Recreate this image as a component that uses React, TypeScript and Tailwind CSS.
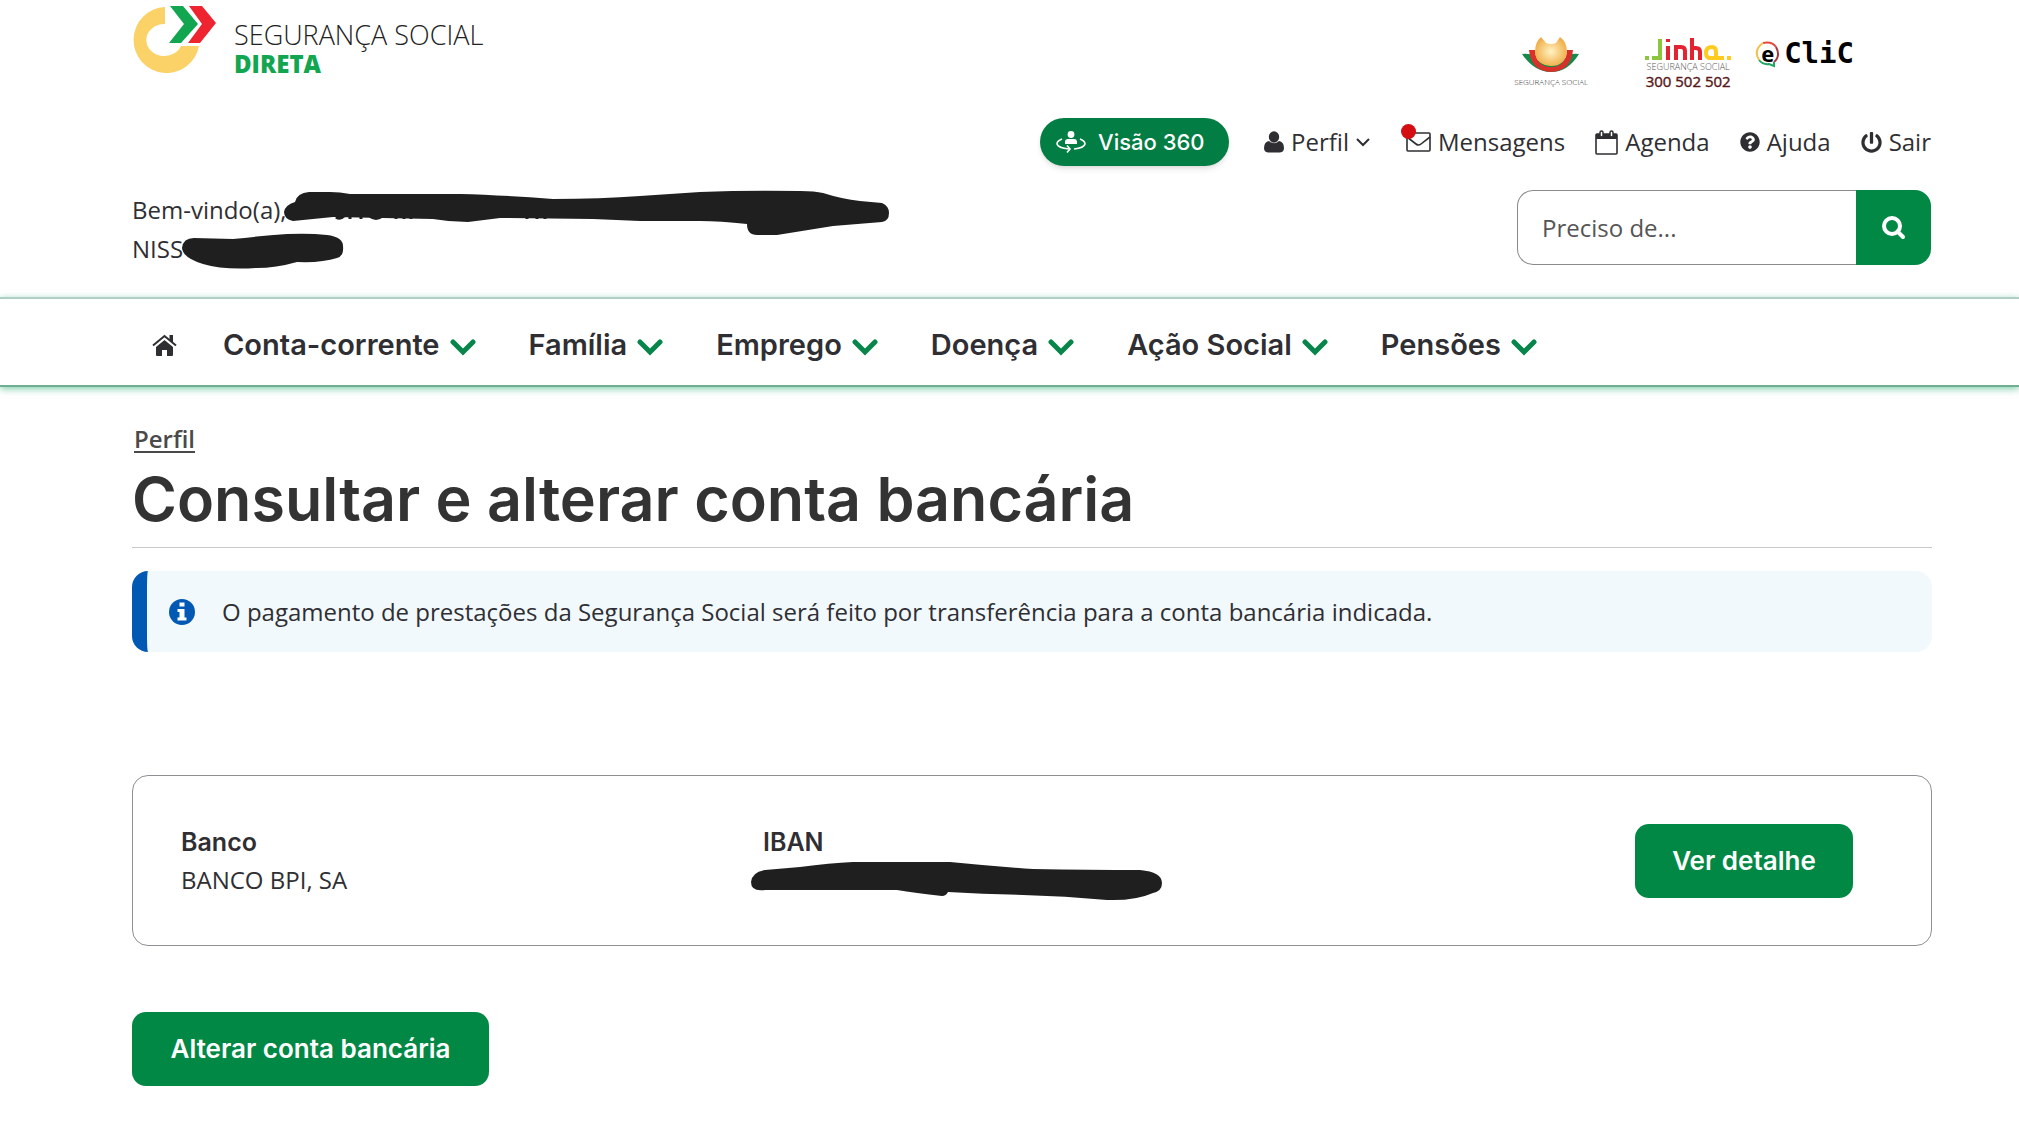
import React from "react";
import { FaPowerOff, FaQuestionCircle } from "react-icons/fa";

const heading = "font-['Inter',sans-serif]";

function DiretaLogo() {
  return (
    <a href="#" className="flex items-start gap-[18px]" aria-label="Segurança Social Direta">
      <svg width="84" height="68" viewBox="0 0 84 68" className="shrink-0">
        <path d="M33 2A33 33 0 1 0 67 41H49A18 16 0 1 1 33 19Z" fill="#fbd267" />
        <path d="M38 1H51L66 19L49 38H37L52 19Z" fill="#12a650" />
        <path d="M57 1H70L84 18L68 38H56L70 19Z" fill="#ee2430" />
      </svg>
      <span className="flex flex-col pt-[15px] font-['Open_Sans',sans-serif]">
        <span className="text-[27px] leading-[30px] font-light text-[#222]">SEGURANÇA SOCIAL</span>
        <span className="text-[24px] leading-[28px] font-extrabold text-[#12a650]">DIRETA</span>
      </span>
    </a>
  );
}

function SegSocialLogo() {
  return (
    <a href="#" className="flex flex-col items-center" aria-label="Segurança Social">
      <svg width="58" height="38" viewBox="0 0 58 38">
        <defs>
          <radialGradient id="sun" cx="50%" cy="50%" r="55%">
            <stop offset="0" stopColor="#fff3c4" />
            <stop offset="1" stopColor="#f0ab42" />
          </radialGradient>
        </defs>
        <path d="M0 17Q5 16 10 18Q28 38 47 18Q52 16 57 17Q46 35 29 35Q12 35 0 17Z" fill="#148a4b" />
        <path d="M7 13H13Q14 30 29 30Q44 30 45 13H51Q49 34 29 35Q9 34 7 13Z" fill="#d8302a" />
        <path d="M19 0L24 6Q29 8 34 6L38 0Q45 5 45 15Q43 29 29 29Q14 28 13 15Q13 5 19 0Z" fill="url(#sun)" />
      </svg>
      <span className="font-['Open_Sans',sans-serif] text-[8px] leading-[14px] font-light text-[#333]">SEGURANÇA SOCIAL</span>
    </a>
  );
}

function LinhaLogo() {
  return (
    <a href="#" className="flex w-[86px] flex-col items-center font-['Open_Sans',sans-serif]" aria-label="Linha Segurança Social">
      <svg width="86" height="24" viewBox="0 0 86 24" fill="none" strokeWidth="4">
        <path d="M0 21H4M7 21H15V2" stroke="#8cc63f" />
        <path d="M23 23V9M23 2V5M31 23V10H36Q40 10 40 14V23M47 23V1M47 11H51Q55 11 55 15V23" stroke="#e32430" />
        <path d="M71 21H65Q61 21 61 16Q61 10 67 10Q71 10 71 15V21H79M82 21H86" stroke="#ffcb1f" />
      </svg>
      <span className="text-[9px] leading-[11px] font-light whitespace-nowrap text-[#555]">SEGURANÇA SOCIAL</span>
      <span className="text-[15px] leading-[18px] whitespace-nowrap text-[#571719] [-webkit-text-stroke:0.4px_#571719]">300 502 502</span>
    </a>
  );
}

function EclicLogo() {
  return (
    <a href="#" className="flex items-center gap-1 text-black" aria-label="e-Clic">
      <span className="relative flex size-[25px] items-center justify-center">
        <svg width="25" height="27" viewBox="0 0 25 27" className="absolute inset-0" fill="none" strokeWidth="2">
          <path d="M8 2Q17 0 21 6" stroke="#e5493d" />
          <path d="M21 6Q26 15 19 21" stroke="#a33a3f" />
          <path d="M19 21V25L14 23Q8 24 4 19" stroke="#22a565" />
          <path d="M4 19Q-2 9 8 2" stroke="#f1c14a" />
        </svg>
        <span className="font-['Open_Sans',sans-serif] text-[22px] leading-[20px] font-bold">e</span>
      </span>
      <span className="font-['DejaVu_Sans_Mono',monospace] text-[29px] leading-[32px] font-bold">CliC</span>
    </a>
  );
}

function Rotate360() {
  return (
    <svg width="30" height="24" viewBox="0 0 30 24" fill="none" stroke="white" strokeWidth="1.6">
      <circle cx="15" cy="4.500" r="3.4" fill="white" stroke="none" />
      <path d="M9 14V12Q9 9 12 9H18Q21 9 21 12V14Z" fill="white" stroke="none" />
      <path d="M6 9Q1 11 1 14Q2 18 13 19M24 9Q29 11 29 14Q28 18 18 19" />
      <path d="M11 15.500L14 19L11 22.500" />
    </svg>
  );
}

function UserIcon() {
  return (
    <svg width="20" height="22" viewBox="0 0 20 22" fill="currentColor">
      <ellipse cx="10" cy="6" rx="5.200" ry="5.800" />
      <path d="M5 10Q10 14.500 15 10Q20 11 20 17Q20 21 16 21.500H4Q0 21 0 17Q0 11 5 10Z" />
    </svg>
  );
}

function CalendarIcon() {
  return (
    <svg width="23" height="25" viewBox="0 0 23 25" fill="none" stroke="currentColor">
      <rect x="1" y="4" width="21" height="20" rx="1" strokeWidth="1.600" />
      <path d="M1 6.500H22" strokeWidth="5" />
      <rect x="5" y="1" width="3" height="6" rx="1.500" fill="white" strokeWidth="1.500" />
      <rect x="15" y="1" width="3" height="6" rx="1.500" fill="white" strokeWidth="1.500" />
    </svg>
  );
}

function HomeIcon() {
  return (
    <svg width="25" height="22" viewBox="0 0 25 22" fill="currentColor">
      <path d="M12.500 6L21 13V21Q21 22 20 22H15V16H10V22H5Q4 22 4 21V13Z" />
      <path d="M1 11.500L12.500 2L24 11.500" fill="none" stroke="currentColor" strokeWidth="2" />
      <path d="M17.500 1H21V9L17.500 6Z" />
    </svg>
  );
}

function SearchIcon() {
  return (
    <svg width="24" height="24" viewBox="0 0 24 24" fill="none" stroke="currentColor" strokeWidth="4">
      <circle cx="10" cy="10" r="8" />
      <path d="M15.500 15.500L21 21" strokeLinecap="round" />
    </svg>
  );
}

function InfoIcon() {
  return (
    <svg width="26" height="26" viewBox="0 0 26 26" className="shrink-0">
      <circle cx="13" cy="13" r="13" fill="#0259b3" />
      <path d="M10.500 3.500H15.500V7.500H10.500ZM8.500 10H15.500V18.500H17.500V21.500H8.500V18.500H10.500V13H8.500Z" fill="white" />
    </svg>
  );
}

function Envelope() {
  return (
    <svg width="25" height="20" viewBox="0 0 25 20" fill="none" stroke="#2f2f33" strokeWidth="1.6" strokeLinejoin="round">
      <rect x="1" y="1" width="23" height="18" rx="1" />
      <path d="M1 5L10 12Q12.500 14 15 12L24 5" />
    </svg>
  );
}

const menu = ["Conta-corrente", "Família", "Emprego", "Doença", "Ação Social", "Pensões"];

export default function App() {
  return (
    <div className="min-h-screen bg-white font-['Open_Sans',sans-serif] text-[24px] leading-[38px] text-[#2f2f33]">
      <header className="flex justify-between pt-[5px] pr-[88px] pl-[132px]">
        <div>
          <DiretaLogo />
          <div className="relative mt-[112px] leading-[39px]">
            <p>Bem-vindo(a),</p>
            <p>NISS</p>
            <svg className="pointer-events-none absolute top-0 left-0 overflow-visible" width="760" height="80" viewBox="132 190 760 80" fill="#1f1f1f">
              <path d="M284 212Q285 205 295 202Q297 193 309 192H330Q340 192 350 194H460Q500 195 553 199Q600 199 640 196L700 192Q750 190 800 191Q815 191 823 193Q842 199 860 201L882 203Q889 206 889 213Q889 221 882 222L833 226L777 235H757Q747 235 747 224Q720 221 700 221H640L593 219L500 218L468 222Q450 222 433 219L333 217L293 221Q284 219 284 212Z" />
              <path d="M182 248Q183 238 194 238L233 239Q260 236 287 234Q310 233 327 235Q343 237 343 246Q344 256 337 258Q322 263 297 262Q276 268 256 268Q223 270 203 264Q183 258 182 248Z" />
              <path d="M336 217Q340 220 344 216M350 219V214M361 219V214M370 216Q376 221 382 216M396 219V215M404 219V215M411 219V215M527 219V216M537 219V216M545 219V216" fill="none" stroke="#1f1f1f" strokeWidth="3" />
            </svg>
          </div>
        </div>

        <div className="flex flex-col items-end">
          <div className="flex items-start pt-[32px] pr-[77px]">
            <SegSocialLogo />
            <div className="ml-[57px]"><LinhaLogo /></div>
            <div className="ml-[24px]"><EclicLogo /></div>
          </div>

          <nav className="mt-[28px] flex h-[48px] items-center whitespace-nowrap" aria-label="Utilizador">
            <button className={`${heading} mr-[35px] flex h-[48px] w-[189px] items-center gap-[12px] rounded-full bg-[#027d43] pl-[16px] text-[22px] font-medium text-white shadow-md`}>
              <Rotate360 />
              Visão 360
            </button>
            <a href="#" className="mr-[36px] flex items-center gap-[7px]">
              <UserIcon />
              Perfil
              <svg width="14" height="9" viewBox="0 0 14 9" fill="none" stroke="currentColor" strokeWidth="2"><path d="M1 1L7 7L13 1" /></svg>
            </a>
            <a href="#" className="relative mr-[30px] flex items-center gap-[7px]">
              <Envelope />
              <span className="absolute top-[1px] left-[-5px] size-[15px] rounded-full bg-[#d40d12]" />
              Mensagens
            </a>
            <a href="#" className="mr-[30px] flex items-center gap-[7px]">
              <CalendarIcon />
              Agenda
            </a>
            <a href="#" className="mr-[30px] flex items-center gap-[7px]">
              <FaQuestionCircle size={20} />
              Ajuda
            </a>
            <a href="#" className="flex items-center gap-[7px]">
              <FaPowerOff size={21} />
              Sair
            </a>
          </nav>

          <form className="mt-[24px] flex h-[75px] w-[414px]" onSubmit={(e) => e.preventDefault()}>
            <input
              type="text"
              aria-label="Pesquisar"
              placeholder="Preciso de..."
              className="min-w-0 flex-1 rounded-l-[16px] border border-r-0 border-[#8a8a8a] pl-6 outline-none placeholder:text-[#555]"
            />
            <button aria-label="Procurar" className="flex w-[75px] items-center justify-center rounded-r-[16px] bg-[#028845] text-white">
              <SearchIcon />
            </button>
          </form>
        </div>
      </header>

      <nav
        aria-label="Principal"
        className={`${heading} mt-[29px] flex h-[90px] items-center border-t-2 border-b-2 border-t-[#b0cfc4] border-b-[#6fae92] pt-[5px] pl-[152px] text-[29px] font-semibold whitespace-nowrap shadow-[0_2px_7px_#2fae7499]`}
      >
        <a href="#" aria-label="Início" className="mr-[46px]">
          <HomeIcon />
        </a>
        <div className="flex gap-[53px]">
          {menu.map((m) => (
            <button key={m} className="flex items-center gap-[10px]">
              {m}
              <svg width="26" height="18" viewBox="0 0 26 18" className="mt-[4px]" fill="none" stroke="#07854a" strokeWidth="5">
                <path d="M3 4L13 14L23 4" strokeLinecap="round" />
              </svg>
            </button>
          ))}
        </div>
      </nav>

      <main className="pt-[33px] pr-[87px] pl-[132px]">
        <a href="#" className="ml-[2px] block w-fit font-semibold text-[#4a4a4a] underline decoration-2 underline-offset-[3px]">
          Perfil
        </a>
        <h1 className={`${heading} border-b border-[#c8c8c8] pt-[2px] pb-[9px] text-[61px] leading-[78px] font-semibold text-[#333]`}>
          Consultar e alterar conta bancária
        </h1>

        <div className="mt-[23px] flex h-[81px] items-center rounded-[16px] border-l-[15px] border-[#0259b3] bg-[#f2f9fd] pl-[22px]">
          <InfoIcon />
          <p className="ml-[27px]">
            O pagamento de prestações da Segurança Social será feito por transferência para a conta bancária indicada.
          </p>
        </div>

        <section className="mt-[123px] flex h-[171px] items-center rounded-[16px] border border-[#8f8f94] pr-[78px] pl-[48px]">
          <dl className="w-[582px]">
            <dt className={`${heading} text-[25px] leading-[37px] font-semibold`}>Banco</dt>
            <dd className="leading-[37px]">BANCO BPI, SA</dd>
          </dl>
          <dl>
            <dt className={`${heading} text-[25px] leading-[37px] font-semibold`}>IBAN</dt>
            <dd className="h-[37px]">
              <svg width="412" height="40" viewBox="751 861 412 40" className="-ml-3" fill="#1f1f1f" role="img" aria-label="IBAN oculto">
                <path d="M751 882Q752 872 765 870L800 867Q830 863 853 862H950Q990 866 1033 869Q1090 870 1140 870Q1162 872 1162 883Q1162 891 1153 893Q1135 901 1107 900Q1065 896 1023 895Q985 894 948 892Q946 896 942 896Q915 893 897 890H765Q751 892 751 882Z" />
              </svg>
            </dd>
          </dl>
          <button className={`${heading} ml-auto h-[74px] w-[218px] rounded-[14px] bg-[#028845] text-[26px] font-semibold text-white`}>
            Ver detalhe
          </button>
        </section>

        <button className={`${heading} mt-[66px] h-[74px] w-[357px] rounded-[14px] bg-[#028845] text-[26px] font-semibold text-white`}>
          Alterar conta bancária
        </button>
      </main>
    </div>
  );
}
